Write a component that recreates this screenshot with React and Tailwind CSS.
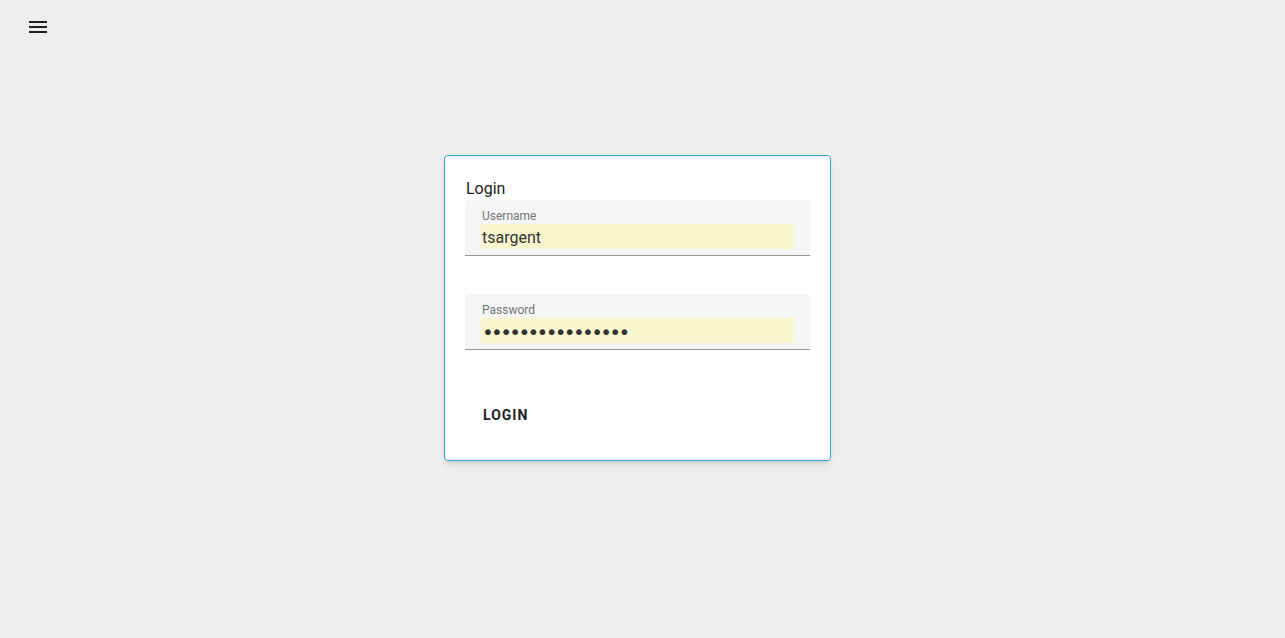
import { useState } from "react"

const Field = ({ label, type, value }) => {
    const [val, setVal] = useState(value)
    return (
        <div className="bg-[#f5f5f5] rounded-t-[4px] border-b border-[#949494] px-4 pt-[8px] pb-[6px]">
            <label className="block pl-[1px] text-[12px] leading-4 text-[#757575]">{label}</label>
            <input
                type={type}
                value={val}
                onChange={(e) => setVal(e.target.value)}
                className={
                    type === "password"
                        ? "block w-full h-[25px] pl-[1px] pt-[3px] bg-[#f9f6ce] text-[20px] text-[#333333] outline-none font-['DejaVu_Sans',sans-serif] tracking-[-2.7px]"
                        : "block w-full h-[25px] pl-[1px] pt-[2px] bg-[#f9f6ce] text-[16px] text-[#333333] outline-none"
                }
            />
        </div>
    )
}

const App = () => {
    return (
        <div className="min-h-[638px] bg-[#eeeeee]" style={{ fontFamily: 'Roboto, "Liberation Sans", sans-serif' }}>
            <header className="h-[54px] pl-[26px] pt-[15px]">
                <button type="button" aria-label="Menu" className="block">
                    <svg width="24" height="24" viewBox="0 0 24 24" fill="#212121">
                        <path d="M3 18h18v-2H3v2zm0-5h18v-2H3v2zm0-7v2h18V6H3z" />
                    </svg>
                </button>
            </header>

            <div className="flex justify-center pr-[10px] pt-[101px]">
                <div className="w-[387px] bg-white border border-[#3ea1cf] rounded-[4px] shadow-md pt-[21px] pb-[27px] px-5">
                    <h2 className="pl-[1px] text-[16px] leading-[23px] text-[#212121]">Login</h2>
                    <Field label="Username" type="text" value="tsargent" />
                    <div className="mt-[38px]">
                        <Field label="Password" type="password" value="passwordpassword" />
                    </div>
                    <div className="mt-[47px]">
                        <button type="button" className="h-9 pl-[18px] pr-4 text-[14px] font-bold tracking-[1px] text-[#222222]">
                            LOGIN
                        </button>
                    </div>
                </div>
            </div>
        </div>
    )
}

export default App
